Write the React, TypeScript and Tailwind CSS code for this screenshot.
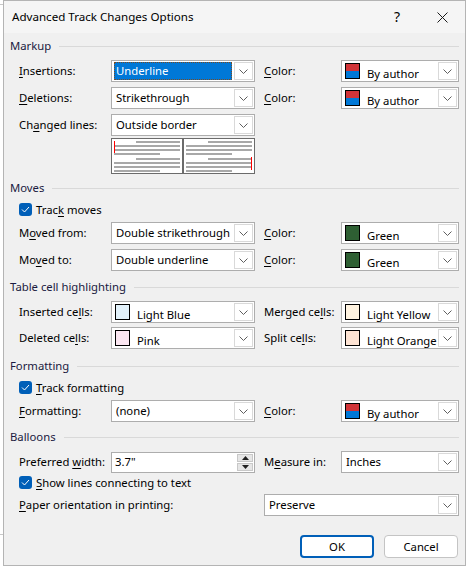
import React from 'react';

const FONT = { fontFamily: '"Noto Sans", "Liberation Sans", sans-serif' };

const K = ({ children }: { children: React.ReactNode }) => (
  <u className="underline decoration-1 underline-offset-[2px]">{children}</u>
);

const Chevron = () => (
  <div className="w-[19px] h-full border border-[#d9d9d9] bg-white flex items-center justify-center">
    <svg width="9" height="5" viewBox="0 0 9 5">
      <path d="M0.5 0.5 L4.5 4.5 L8.5 0.5" fill="none" stroke="#5f5f5f" strokeWidth="1" />
    </svg>
  </div>
);

const Select = ({
  value,
  width,
  selected,
  swatch,
}: {
  value: string;
  width: string;
  selected?: boolean;
  swatch?: React.ReactNode;
}) => (
  <div className={`${width} h-[22px] border border-[#adadad] bg-white flex p-px`}>
    <div className="flex-1 flex items-center min-w-0">
      {swatch ? (
        <div className="flex items-center h-full pl-[2px]">
          {swatch}
          <span className="ml-[7px] mt-[5px] text-black">{value}</span>
        </div>
      ) : selected ? (
        <span className="ml-px h-[18px] flex-1 mr-[2px] bg-[#0078d7] text-white pl-[2px] flex items-center outline-1 outline-dotted outline-[#7a4a20] -outline-offset-1">
          {value}
        </span>
      ) : (
        <span className="pl-[3px] text-black">{value}</span>
      )}
    </div>
    <Chevron />
  </div>
);

const Swatch = ({ color }: { color: string }) => (
  <div className="w-[15px] h-[16px] border border-black" style={{ background: color }} />
);

const AuthorSwatch = () => (
  <div className="w-[15px] h-[16px] border border-black flex flex-col">
    <div className="flex-1 bg-[#d13438]" />
    <div className="flex-1 bg-[#0078d7]" />
  </div>
);

const Header = ({ title, mt }: { title: string; mt: string }) => (
  <div className={`${mt} h-[18px] flex items-center pl-[6px] pr-[6px]`}>
    <span className="text-[#1a1a40]">{title}</span>
    <div className="flex-1 ml-[8px] h-px bg-[#d9d9d9]" />
  </div>
);

const Check = ({ label, mt }: { label: React.ReactNode; mt: string }) => (
  <div className={`${mt} h-[13px] flex items-center pl-[15px]`}>
    <div className="w-[13px] h-[13px] rounded-[3px] bg-[#005fb8] flex items-center justify-center">
      <svg width="9" height="7" viewBox="0 0 9 7">
        <path d="M1 3.5 L3.5 6 L8 1" fill="none" stroke="white" strokeWidth="1" />
      </svg>
    </div>
    <span className="ml-[4px] text-black">{label}</span>
  </div>
);

const Row = ({
  mt,
  label,
  control,
  label2,
  control2,
}: {
  mt: string;
  label: React.ReactNode;
  control: React.ReactNode;
  label2?: React.ReactNode;
  control2?: React.ReactNode;
}) => (
  <div className={`${mt} h-[22px] flex items-center pl-[15px]`}>
    <div className="w-[92px] text-black">{label}</div>
    {control}
    {label2 && <div className="ml-[9px] w-[77px] text-black">{label2}</div>}
    {control2}
  </div>
);

const PreviewPanel = ({ side }: { side: 'left' | 'right' }) => {
  const group = (
    <div className="flex flex-col gap-[2px]">
      <div className="h-[2px] ml-[22px] bg-[#a8a8a8]" />
      <div className="h-[2px] bg-[#a8a8a8]" />
      <div className="h-[2px] bg-[#a8a8a8]" />
      <div className="h-[2px] w-[46px] bg-[#a8a8a8]" />
    </div>
  );
  return (
    <div className="relative flex-1 flex flex-col gap-[3px] px-[2px] pt-[2px]">
      {group}
      {group}
      {side === 'left' ? (
        <div className="absolute left-[2px] top-[2px] w-px h-[12px] bg-[#ff0000]" />
      ) : (
        <div className="absolute right-[2px] top-[18px] w-px h-[13px] bg-[#ff0000]" />
      )}
    </div>
  );
};

export default function App() {
  return (
    <div className="w-[467px] h-[568px] bg-white relative overflow-hidden text-[11.3px] leading-none whitespace-nowrap" style={FONT}>
      <div className="absolute left-0 top-[4px] w-[3px] h-px bg-[#c8c8c8]" />
      <div className="absolute left-0 top-[534px] w-[3px] h-px bg-[#c8c8c8]" />
      <div className="ml-[3px] w-[463px] h-[566px] border border-[#b4b4b4] bg-[#f0f0f0] flex flex-col">
        <div className="h-[32px] bg-[#f5f5f5] flex items-center pl-[8px] text-black text-[11.6px]">
          <span className="flex-1">Advanced Track Changes Options</span>
          <span className="w-[46px] text-center text-[14px]">?</span>
          <span className="w-[44px] flex justify-center mr-[1px]">
            <svg width="11" height="11" viewBox="0 0 11 11">
              <path d="M0.5 0.5 L10.5 10.5 M10.5 0.5 L0.5 10.5" stroke="#1a1a1a" strokeWidth="1" />
            </svg>
          </span>
        </div>

        <Header title="Markup" mt="mt-[4px]" />
        <Row
          mt="mt-[5px]"
          label={<><K>I</K>nsertions:</>}
          control={<Select value="Underline" width="w-[144px]" selected />}
          label2={<><K>C</K>olor:</>}
          control2={<Select value="By author" width="w-[118px]" swatch={<AuthorSwatch />} />}
        />
        <Row
          mt="mt-[5px]"
          label={<><K>D</K>eletions:</>}
          control={<Select value="Strikethrough" width="w-[144px]" />}
          label2={<><K>C</K>olor:</>}
          control2={<Select value="By author" width="w-[118px]" swatch={<AuthorSwatch />} />}
        />
        <Row
          mt="mt-[5px]"
          label={<>Ch<K>a</K>nged lines:</>}
          control={<Select value="Outside border" width="w-[144px]" />}
        />
        <div className="mt-[2px] pl-[107px]">
          <div className="w-[144px] h-[36px] border border-[#6b6b6b] bg-white flex">
            <PreviewPanel side="left" />
            <div className="w-[2px] bg-[#6b6b6b]" />
            <PreviewPanel side="right" />
          </div>
        </div>

        <Header title="Moves" mt="mt-[5px]" />
        <Check mt="mt-[6px]" label={<>Trac<K>k</K> moves</>} />
        <Row
          mt="mt-[6px]"
          label={<>M<K>o</K>ved from:</>}
          control={<Select value="Double strikethrough" width="w-[144px]" />}
          label2={<><K>C</K>olor:</>}
          control2={<Select value="Green" width="w-[118px]" swatch={<Swatch color="#2e5f33" />} />}
        />
        <Row
          mt="mt-[5px]"
          label={<>Mo<K>v</K>ed to:</>}
          control={<Select value="Double underline" width="w-[144px]" />}
          label2={<><K>C</K>olor:</>}
          control2={<Select value="Green" width="w-[118px]" swatch={<Swatch color="#2e5f33" />} />}
        />

        <Header title="Table cell highlighting" mt="mt-[7px]" />
        <Row
          mt="mt-[5px]"
          label={<>Inserted ce<K>l</K>ls:</>}
          control={<Select value="Light Blue" width="w-[144px]" swatch={<Swatch color="#e2f1fa" />} />}
          label2={<>Merged ce<K>l</K>ls:</>}
          control2={<Select value="Light Yellow" width="w-[118px]" swatch={<Swatch color="#fff3e0" />} />}
        />
        <Row
          mt="mt-[4px]"
          label={<>Deleted ce<K>l</K>ls:</>}
          control={<Select value="Pink" width="w-[144px]" swatch={<Swatch color="#fbe6f1" />} />}
          label2={<>Split ce<K>l</K>ls:</>}
          control2={<Select value="Light Orange" width="w-[118px]" swatch={<Swatch color="#fde3d3" />} />}
        />

        <Header title="Formatting" mt="mt-[8px]" />
        <Check mt="mt-[6px]" label={<><K>T</K>rack formatting</>} />
        <Row
          mt="mt-[6px]"
          label={<><K>F</K>ormatting:</>}
          control={<Select value="(none)" width="w-[144px]" />}
          label2={<><K>C</K>olor:</>}
          control2={<Select value="By author" width="w-[118px]" swatch={<AuthorSwatch />} />}
        />

        <Header title="Balloons" mt="mt-[6px]" />
        <Row
          mt="mt-[5px]"
          label={<>Preferred <K>w</K>idth:</>}
          control={
            <div className="w-[144px] h-[21px] border border-[#adadad] bg-white flex p-px">
              <span className="flex-1 pl-[2px] flex items-center text-black">3.7"</span>
              <div className="w-[16px] flex flex-col gap-px">
                <div className="flex-1 bg-[#e6e6e6] border border-[#c8c8c8] flex items-center justify-center">
                  <svg width="7" height="4" viewBox="0 0 7 4"><path d="M0 4 L3.5 0 L7 4 Z" fill="#202020" /></svg>
                </div>
                <div className="flex-1 bg-[#e6e6e6] border border-[#c8c8c8] flex items-center justify-center">
                  <svg width="7" height="4" viewBox="0 0 7 4"><path d="M0 0 L3.5 4 L7 0 Z" fill="#202020" /></svg>
                </div>
              </div>
            </div>
          }
          label2={<>M<K>e</K>asure in:</>}
          control2={<Select value="Inches" width="w-[118px]" />}
        />
        <Check mt="mt-[3px]" label={<><K>S</K>how lines connecting to text</>} />
        <div className="mt-[5px] h-[22px] flex items-center pl-[15px]">
          <div className="w-[245px] text-black">
            <K>P</K>aper orientation in printing:
          </div>
          <Select value="Preserve" width="w-[195px]" />
        </div>

        <div className="mt-[19px] flex justify-end gap-[10px] pr-[7px]">
          <button className="w-[74px] h-[23px] rounded-[4px] border-2 border-[#005fb8] bg-white text-black">OK</button>
          <button className="w-[74px] h-[23px] rounded-[4px] border border-[#c4c4c4] bg-white text-black">Cancel</button>
        </div>
      </div>
    </div>
  );
}
